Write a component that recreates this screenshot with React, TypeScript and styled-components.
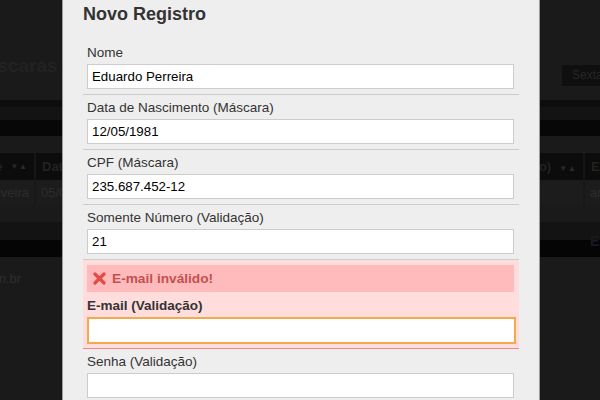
import React from "react";
import styled, { createGlobalStyle } from "styled-components";

const GlobalStyle = createGlobalStyle`
  html, body { margin: 0; padding: 0; }
  body {
    background: #1a1a1a;
    overflow: hidden;
    width: 600px;
    height: 400px;
    font-family: "Liberation Sans", Arial, sans-serif;
  }
  * { box-sizing: border-box; }
`;

const Screen = styled.div`
  position: relative;
  width: 600px;
  height: 400px;
  overflow: hidden;
  background: #1a1a1a;
`;

/* ---------- dimmed background page ---------- */
const Page = styled.div`
  display: flex;
  flex-direction: column;
  width: 600px;
`;

const PageHeader = styled.div`
  height: 100px;
  display: flex;
  align-items: flex-start;
`;

const PageTitle = styled.h1`
  margin: 55px 0 0 -29px;
  font-size: 19px;
  line-height: 22px;
  font-weight: bold;
  color: #222222;
  white-space: nowrap;
`;

const DateButton = styled.div`
  margin: 65px -42px 0 auto;
  width: 80px;
  height: 21px;
  background: #0f0f0f;
  color: #262626;
  font-size: 12px;
  line-height: 21px;
  padding-left: 10px;
  white-space: nowrap;
  overflow: hidden;
`;

const Band = styled.div<{ $h: number; $bg: string }>`
  height: ${(p) => p.$h}px;
  background: ${(p) => p.$bg};
`;

const Grid = styled.div<{ $h: number; $bg: string }>`
  display: grid;
  grid-template-columns: 120px 547px 129px;
  gap: 2px;
  margin-left: -86px;
  width: 800px;
  height: ${(p) => p.$h}px;
  background: ${(p) => p.$bg};
`;

const HeadCell = styled.div<{ $align?: string }>`
  background: #0c0c0c;
  display: flex;
  align-items: center;
  justify-content: ${(p) => p.$align || "flex-start"};
  padding: 0 6px;
  color: #222222;
  font-weight: bold;
  font-size: 13px;
  white-space: nowrap;
  overflow: hidden;
`;

const Arrows = styled.span`
  font-size: 8px;
  color: #2a2a2a;
  letter-spacing: 1px;
  margin-left: 8px;
`;

const BodyCell = styled.div<{ $align?: string }>`
  background: #1c1c1c;
  display: flex;
  align-items: center;
  justify-content: ${(p) => p.$align || "flex-start"};
  padding: 0 5px;
  color: #2c2c2c;
  font-size: 13px;
  white-space: nowrap;
  overflow: hidden;
`;

const FooterBar = styled.div`
  height: 35px;
  background: linear-gradient(#131313 0 18px, #050505 18px 35px);
  display: flex;
  align-items: center;
  padding-left: 590px;
  padding-top: 2px;
  color: #151b24;
  font-size: 14px;
  font-weight: bold;
  white-space: nowrap;
`;

const Credit = styled.div`
  width: 21px;
  height: 43px;
  display: flex;
  align-items: center;
  justify-content: flex-end;
  white-space: nowrap;
  color: #2e2e2e;
  font-size: 13px;
`;

/* ---------- modal ---------- */
const Modal = styled.div`
  position: absolute;
  top: 0;
  left: 62px;
  width: 478px;
  height: 440px;
  background: #eeeeee;
  border-left: 1px solid #9a9a9a;
  border-right: 1px solid #9a9a9a;
  padding: 3px 20px 0 20px;
  display: flex;
  flex-direction: column;
`;

const ModalTitle = styled.h2`
  margin: 0 0 15px 0;
  font-size: 18px;
  line-height: 22px;
  font-weight: bold;
  color: #333;
`;

const FieldRow = styled.div<{ $error?: boolean }>`
  padding: ${(p) => (p.$error ? "5px 5px 4px 4px" : "4px 5px 5px 4px")};
  border-bottom: 1px solid ${(p) => (p.$error ? "#ee8a8a" : "#cccccc")};
  background: ${(p) => (p.$error ? "#ffdddd" : "transparent")};
`;

const Label = styled.label<{ $bold?: boolean }>`
  display: block;
  font-size: 13.5px;
  line-height: 18px;
  margin-bottom: 2px;
  color: #333;
  font-weight: ${(p) => (p.$bold ? "bold" : "normal")};
`;

const Input = styled.input<{ $focus?: boolean }>`
  display: block;
  width: ${(p) => (p.$focus ? "calc(100% + 2px)" : "100%")};
  height: ${(p) => (p.$focus ? 27 : 25)}px;
  margin: 0;
  border: ${(p) => (p.$focus ? "2px solid #f3a94e" : "1px solid #cccccc")};
  background: #fff;
  padding: 0 ${(p) => (p.$focus ? 3 : 4)}px;
  font-family: "Liberation Sans", Arial, sans-serif;
  font-size: 13.3px;
  color: #000;
  outline: none;
`;

const ErrorBox = styled.div`
  height: 27px;
  background: #ffbbbb;
  display: flex;
  align-items: center;
  gap: 6px;
  padding-left: 6px;
  margin-bottom: 5px;
  color: #c25050;
  font-weight: bold;
  font-size: 13.7px;
`;

const CrossIcon = () => (
  <svg width="13" height="13" viewBox="0 0 13 13">
    <path
      d="M2 2 L11 11 M11 2 L2 11"
      stroke="#e34a4a"
      strokeWidth="3.2"
      strokeLinecap="round"
    />
  </svg>
);

type Field = { label: string; value: string };

const fields: Field[] = [
  { label: "Nome", value: "Eduardo Perreira" },
  { label: "Data de Nascimento (Máscara)", value: "12/05/1981" },
  { label: "CPF (Máscara)", value: "235.687.452-12" },
  { label: "Somente Número (Validação)", value: "21" },
];

export default function App() {
  return (
    <>
      <GlobalStyle />
      <Screen>
        <Page>
          <PageHeader>
            <PageTitle>Máscaras</PageTitle>
            <DateButton>Sexta-feira</DateButton>
          </PageHeader>
          <Band $h={7} $bg="#0d0d0d" />
          <Band $h={13} $bg="#131313" />
          <Band $h={16} $bg="#070707" />
          <Band $h={17} $bg="#1a1a1a" />
          <Grid $h={27} $bg="#161616">
            <HeadCell $align="flex-end">
              Nome<Arrows>▼▲</Arrows>
            </HeadCell>
            <HeadCell $align="space-between">
              <span>Data de Nascimento</span>
              <span>
                (Validação)<Arrows>▼▲</Arrows>
              </span>
            </HeadCell>
            <HeadCell>E-mail</HeadCell>
          </Grid>
          <Grid $h={25} $bg="#181818">
            <BodyCell $align="flex-end">Eduardo Oliveira</BodyCell>
            <BodyCell>05/05/1981</BodyCell>
            <BodyCell>arthur@site.com.br</BodyCell>
          </Grid>
          <Band $h={17} $bg="#1a1a1a" />
          <FooterBar>Exportar</FooterBar>
          <Credit>www.site.com.br</Credit>
        </Page>

        <Modal>
          <ModalTitle>Novo Registro</ModalTitle>
          {fields.map((f) => (
            <FieldRow key={f.label}>
              <Label>{f.label}</Label>
              <Input defaultValue={f.value} readOnly />
            </FieldRow>
          ))}
          <FieldRow $error>
            <ErrorBox>
              <CrossIcon />
              <span>E-mail inválido!</span>
            </ErrorBox>
            <Label $bold>E-mail (Validação)</Label>
            <Input $focus defaultValue="" readOnly />
          </FieldRow>
          <FieldRow>
            <Label>Senha (Validação)</Label>
            <Input type="password" defaultValue="" readOnly />
          </FieldRow>
        </Modal>
      </Screen>
    </>
  );
}
